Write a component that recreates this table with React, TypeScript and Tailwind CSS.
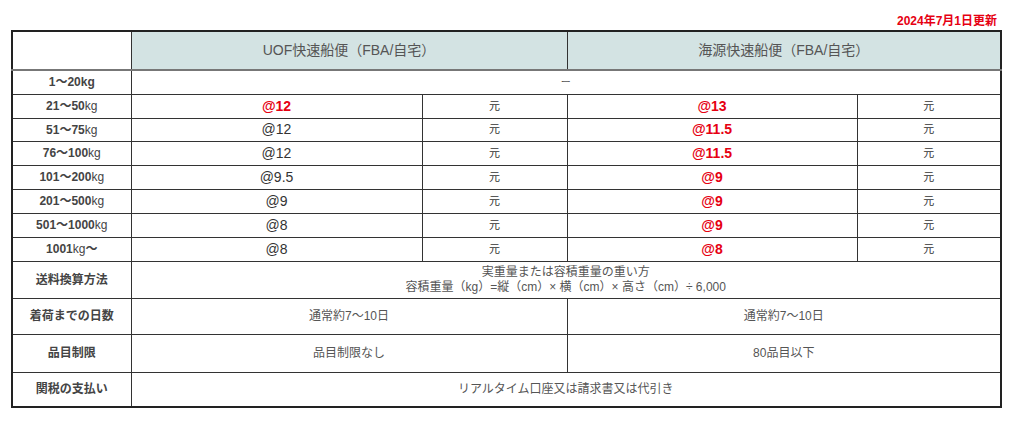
import React from 'react';

const font = { fontFamily: '"Liberation Sans", Arial, "Noto Sans CJK JP", sans-serif' };

type Rate = { label: React.ReactNode; uof: string; uofRed: boolean; kai: string; h: string };

const rates: Rate[] = [
  { label: <>21〜50<span className="font-normal">kg</span></>, uof: '@12', uofRed: true, kai: '@13', h: 'h-[24px]' },
  { label: <>51〜75<span className="font-normal">kg</span></>, uof: '@12', uofRed: false, kai: '@11.5', h: 'h-[23px]' },
  { label: <>76〜100<span className="font-normal">kg</span></>, uof: '@12', uofRed: false, kai: '@11.5', h: 'h-[24px]' },
  { label: <>101〜200<span className="font-normal">kg</span></>, uof: '@9.5', uofRed: false, kai: '@9', h: 'h-[24px]' },
  { label: <>201〜500<span className="font-normal">kg</span></>, uof: '@9', uofRed: false, kai: '@9', h: 'h-[24px]' },
  { label: <>501〜1000<span className="font-normal">kg</span></>, uof: '@8', uofRed: false, kai: '@9', h: 'h-[24px]' },
  { label: <>1001<span className="font-normal">kg</span>〜</>, uof: '@8', uofRed: false, kai: '@8', h: 'h-[24px]' },
];

const td = 'border border-[#333] text-center align-middle p-0';
const labelCls = `${td} text-[12px] font-bold text-[#444]`;
const plain = `${td} text-[12px] text-[#555]`;

export default function App() {
  return (
    <div className="w-[1024px] h-[424px] bg-white" style={font}>
      <div className="pl-[11px] pr-[24px] pt-[12px]">
        <div className="text-right text-[12px] font-bold text-[#e60012] leading-[18px] pr-[3px]">
          2024年7月1日更新
        </div>
        <table className="w-[989px] border-collapse border-2 border-[#222] table-fixed">
          <colgroup>
            <col className="w-[119px]" />
            <col className="w-[291px]" />
            <col className="w-[145px]" />
            <col className="w-[290px]" />
            <col className="w-[144px]" />
          </colgroup>
          <tbody>
            <tr className="h-[39px]">
              <td className={`${td} border-b-2 border-b-[#777]`}></td>
              <td colSpan={2} className={`${td} border-b-2 border-b-[#777] bg-[#d3e3e3] text-[14px] text-[#555]`}>
                UOF快速船便（FBA/自宅）
              </td>
              <td colSpan={2} className={`${td} border-b-2 border-b-[#777] bg-[#d3e3e3] text-[14px] text-[#555]`}>
                海源快速船便（FBA/自宅）
              </td>
            </tr>
            <tr className="h-[24px]">
              <td className={labelCls}>1〜20kg</td>
              <td colSpan={4} className={`${td} text-[10px] text-[#555]`}>ー</td>
            </tr>
            {rates.map((r, i) => (
              <tr key={i} className={r.h}>
                <td className={labelCls}>{r.label}</td>
                <td className={`${td} text-[14px] ${r.uofRed ? 'font-bold text-[#e60012]' : 'text-[#333]'}`}>{r.uof}</td>
                <td className={`${td} text-[11px] text-[#333]`}>元</td>
                <td className={`${td} text-[14px] font-bold text-[#e60012]`}>{r.kai}</td>
                <td className={`${td} text-[11px] text-[#333]`}>元</td>
              </tr>
            ))}
            <tr className="h-[37px]">
              <td className={labelCls}>送料換算方法</td>
              <td colSpan={4} className={`${plain} leading-[15px]`}>
                実重量または容積重量の重い方
                <br />
                容積重量（kg）=縦（cm）× 横（cm）× 高さ（cm）÷ 6,000
              </td>
            </tr>
            <tr className="h-[36px]">
              <td className={labelCls}>着荷までの日数</td>
              <td colSpan={2} className={plain}>通常約7〜10日</td>
              <td colSpan={2} className={plain}>通常約7〜10日</td>
            </tr>
            <tr className="h-[38px]">
              <td className={labelCls}>品目制限</td>
              <td colSpan={2} className={plain}>品目制限なし</td>
              <td colSpan={2} className={plain}>80品目以下</td>
            </tr>
            <tr className="h-[35px]">
              <td className={labelCls}>関税の支払い</td>
              <td colSpan={4} className={plain}>リアルタイム口座又は請求書又は代引き</td>
            </tr>
          </tbody>
        </table>
      </div>
    </div>
  );
}
